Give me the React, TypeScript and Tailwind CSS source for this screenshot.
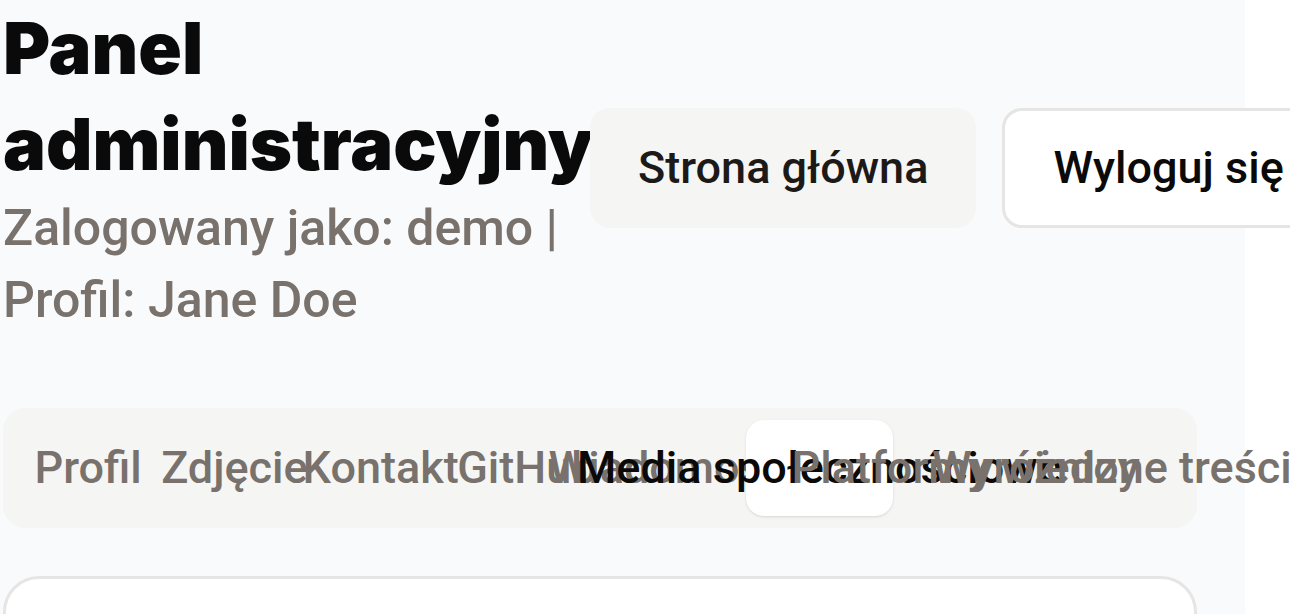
import React, { useState } from 'react';

const tabs = [
  'Profil',
  'Zdjęcie',
  'Kontakt',
  'GitHub',
  'Wiadomości',
  'Media społecznościowe',
  'Platformy wiedzy',
  'Wyróżnione treści',
];

export default function App() {
  const [active, setActive] = useState('Media społecznościowe');

  return (
    <div className="w-[1290px] h-[614px] overflow-hidden bg-white">
      <div className="w-[1245px] min-h-[614px] bg-[#f9fafb] font-['Roboto',sans-serif]">
        <div className="ml-[3px] w-[1194px]">
          {/* Header */}
          <div className="flex items-center">
            <div className="w-[587px] shrink-0">
              <h1 className="font-['Inter',sans-serif] text-[72px] leading-[96px] font-black text-[#0a0a0a]">
                Panel administracyjny
              </h1>
              <p className="text-[50px] leading-[72px] font-medium text-[#78716c]">
                Zalogowany jako: demo | Profil: Jane Doe
              </p>
            </div>
            <div className="flex items-center gap-[26px] shrink-0">
              <button className="h-[120px] px-[48px] rounded-[20px] bg-[#f5f5f4] text-[45px] font-medium text-[#1c1917] whitespace-nowrap">
                Strona główna
              </button>
              <button className="h-[120px] px-[48px] rounded-[20px] bg-white border-[3px] border-[#e7e5e4] text-[45px] font-medium text-[#0c0a09] whitespace-nowrap">
                Wyloguj się
              </button>
            </div>
          </div>

          {/* Tabs */}
          <div className="mt-[72px] h-[120px] p-[12px] rounded-[22px] bg-[#f5f5f4] grid grid-cols-8">
            {tabs.map((t) => (
              <button
                key={t}
                onClick={() => setActive(t)}
                className={`flex items-center justify-center whitespace-nowrap rounded-[18px] text-[45px] font-medium ${
                  active === t ? 'bg-white text-[#0c0a09] shadow-sm' : 'text-[#78716c]'
                }`}
              >
                {t}
              </button>
            ))}
          </div>

          {/* Content card */}
          <div className="mt-[48px] h-[300px] rounded-[36px] border-[3px] border-[#e7e5e4] bg-white"></div>
        </div>
      </div>
    </div>
  );
}
